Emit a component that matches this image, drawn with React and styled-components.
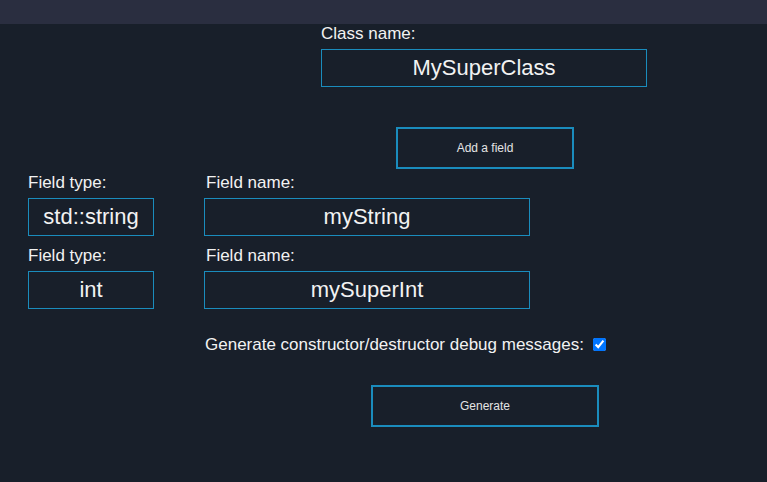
import React from 'react';
import styled, { createGlobalStyle } from 'styled-components';

const GlobalStyle = createGlobalStyle`
  html, body {
    margin: 0;
    padding: 0;
    background-color: #181f2a;
  }
  body {
    font-family: "Liberation Sans", Arial, sans-serif;
    color: #f2f2f2;
  }
`;

const Page = styled.div`
  width: 767px;
  height: 482px;
  background-color: #181f2a;
  overflow: hidden;
`;

const TopBar = styled.div`
  height: 24px;
  background-color: #2a2e40;
`;

const Main = styled.div`
  display: flex;
  flex-direction: column;
  padding-left: 28px;
`;

const Label = styled.label`
  display: block;
  font-size: 17px;
  line-height: 20px;
  height: 20px;
  margin-bottom: 5px;
  color: #f2f2f2;
  padding-left: ${(p) => p.$indent || 0}px;
`;

const TextInput = styled.input`
  box-sizing: border-box;
  width: ${(p) => p.$width}px;
  height: 38px;
  margin: 0;
  padding: 0 4px;
  background-color: transparent;
  border: 1px solid #1a8cbd;
  border-radius: 0;
  color: #f2f2f2;
  font-family: "Liberation Sans", Arial, sans-serif;
  font-size: 22px;
  text-align: center;
  outline: none;
`;

const ClassBlock = styled.div`
  display: flex;
  flex-direction: column;
  margin-left: 293px;
`;

const ButtonRow = styled.div`
  display: flex;
  justify-content: center;
  width: 328px;
  margin-left: 293px;
  margin-top: ${(p) => p.$top}px;
`;

const Button = styled.button`
  box-sizing: border-box;
  width: ${(p) => p.$width}px;
  height: 42px;
  background-color: transparent;
  border: 2px solid #1a8cbd;
  border-radius: 0;
  color: #e4e4e4;
  font-family: "Liberation Sans", Arial, sans-serif;
  font-size: 12px;
  cursor: pointer;
`;

const FieldRow = styled.div`
  display: flex;
  gap: 50px;
  margin-top: ${(p) => p.$top}px;
`;

const FieldColumn = styled.div`
  display: flex;
  flex-direction: column;
`;

const CheckRow = styled.div`
  display: flex;
  align-items: center;
  margin-left: 177px;
  margin-top: 26px;
  height: 20px;
  font-size: 17px;
  line-height: 20px;
`;

const CheckBox = styled.input`
  width: 13px;
  height: 13px;
  margin: -2px 0 0 9px;
`;

const fields = [
  { type: 'std::string', name: 'myString' },
  { type: 'int', name: 'mySuperInt' },
];

const App = () => {
  return (
    <Page>
      <GlobalStyle />
      <TopBar />
      <Main>
        <ClassBlock>
          <Label>Class name:</Label>
          <TextInput $width={326} defaultValue="MySuperClass" />
        </ClassBlock>

        <ButtonRow $top={40}>
          <Button $width={178}>Add a field</Button>
        </ButtonRow>

        {fields.map((f, i) => (
          <FieldRow key={i} $top={i === 0 ? 4 : 10}>
            <FieldColumn>
              <Label>Field type:</Label>
              <TextInput $width={126} defaultValue={f.type} />
            </FieldColumn>
            <FieldColumn>
              <Label $indent={2}>Field name:</Label>
              <TextInput $width={326} defaultValue={f.name} />
            </FieldColumn>
          </FieldRow>
        ))}

        <CheckRow>
          <span>Generate constructor/destructor debug messages:</span>
          <CheckBox type="checkbox" defaultChecked />
        </CheckRow>

        <ButtonRow $top={30}>
          <Button $width={228}>Generate</Button>
        </ButtonRow>
      </Main>
    </Page>
  );
};

export default App;
